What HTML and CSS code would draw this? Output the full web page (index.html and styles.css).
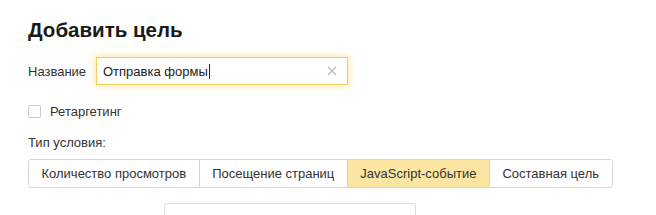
FILE: index.html
```html
<!DOCTYPE html>
<html lang="ru">
<head>
  <meta charset="UTF-8">
  <title>Добавить цель</title>
  <link rel="stylesheet" href="styles.css">
</head>
<body>
  <div class="dialog">
    <h1 class="dialog-title">Добавить цель</h1>

    <div class="field">
      <label class="field-label">Название</label>
      <div class="input-box">
        <span class="input-text">Отправка формы</span>
        <span class="caret"></span>
        <svg class="clear" width="10" height="10" viewBox="0 0 10 10">
          <path d="M1 1L9 9M9 1L1 9" stroke="#b8b8b8" stroke-width="1.1" fill="none"/>
        </svg>
      </div>
    </div>

    <label class="check">
      <span class="check-box"></span>
      <span>Ретаргетинг</span>
    </label>

    <div class="cond-label">Тип условия:</div>
    <div class="tabs">
      <button class="tab">Количество просмотров</button>
      <button class="tab">Посещение страниц</button>
      <button class="tab active">JavaScript-событие</button>
      <button class="tab">Составная цель</button>
    </div>

    <div class="next-box"></div>
  </div>
</body>
</html>
```

FILE: styles.css
```css
body {
  margin: 0;
  background: #fff;
  font-family: "Liberation Sans", Arial, sans-serif;
  color: #222;
  font-size: 13px;
  overflow: hidden;
}

.dialog {
  padding: 17px 0 0 28px;
  height: 215px;
  box-sizing: border-box;
}

.dialog-title {
  margin: 0;
  font-size: 20.5px;
  font-weight: bold;
  color: #1a1a1a;
  line-height: 26px;
}

.field {
  display: flex;
  align-items: center;
  margin-top: 14px;
}

.field-label {
  width: 68px;
  color: #333;
}

.input-box {
  position: relative;
  display: flex;
  align-items: center;
  width: 250px;
  height: 26px;
  border: 1px solid #f0cf5c;
  box-shadow: 0 0 6px 2px rgba(250, 215, 90, 0.45);
  background: #fff;
}

.input-text {
  padding-left: 6px;
  color: #222;
}

.caret {
  width: 1px;
  height: 15px;
  margin-left: 1px;
  background: #222;
}

.clear {
  position: absolute;
  right: 10px;
  top: 8px;
}

.check {
  display: flex;
  align-items: center;
  gap: 9px;
  margin-top: 19px;
  color: #333;
}

.check-box {
  width: 11px;
  height: 11px;
  border: 1px solid #c9c9c9;
  border-radius: 2px;
  background: #fff;
}

.cond-label {
  margin-top: 16px;
  color: #333;
}

.tabs {
  display: flex;
  margin-top: 9px;
  width: max-content;
  border: 1px solid #d6d6d6;
  border-radius: 3px;
  overflow: hidden;
}

.tab {
  font: inherit;
  color: #333;
  background: #fff;
  border: none;
  border-left: 1px solid #d6d6d6;
  height: 27px;
  padding: 0 12.5px;
}

.tab:first-child {
  border-left: none;
}

.tab.active {
  background: #fae6a2;
  color: #333;
}

.next-box {
  margin: 15px 0 0 136px;
  width: 250px;
  height: 20px;
  border: 1px solid #dedede;
  border-bottom: none;
  border-radius: 3px 3px 0 0;
}
```
